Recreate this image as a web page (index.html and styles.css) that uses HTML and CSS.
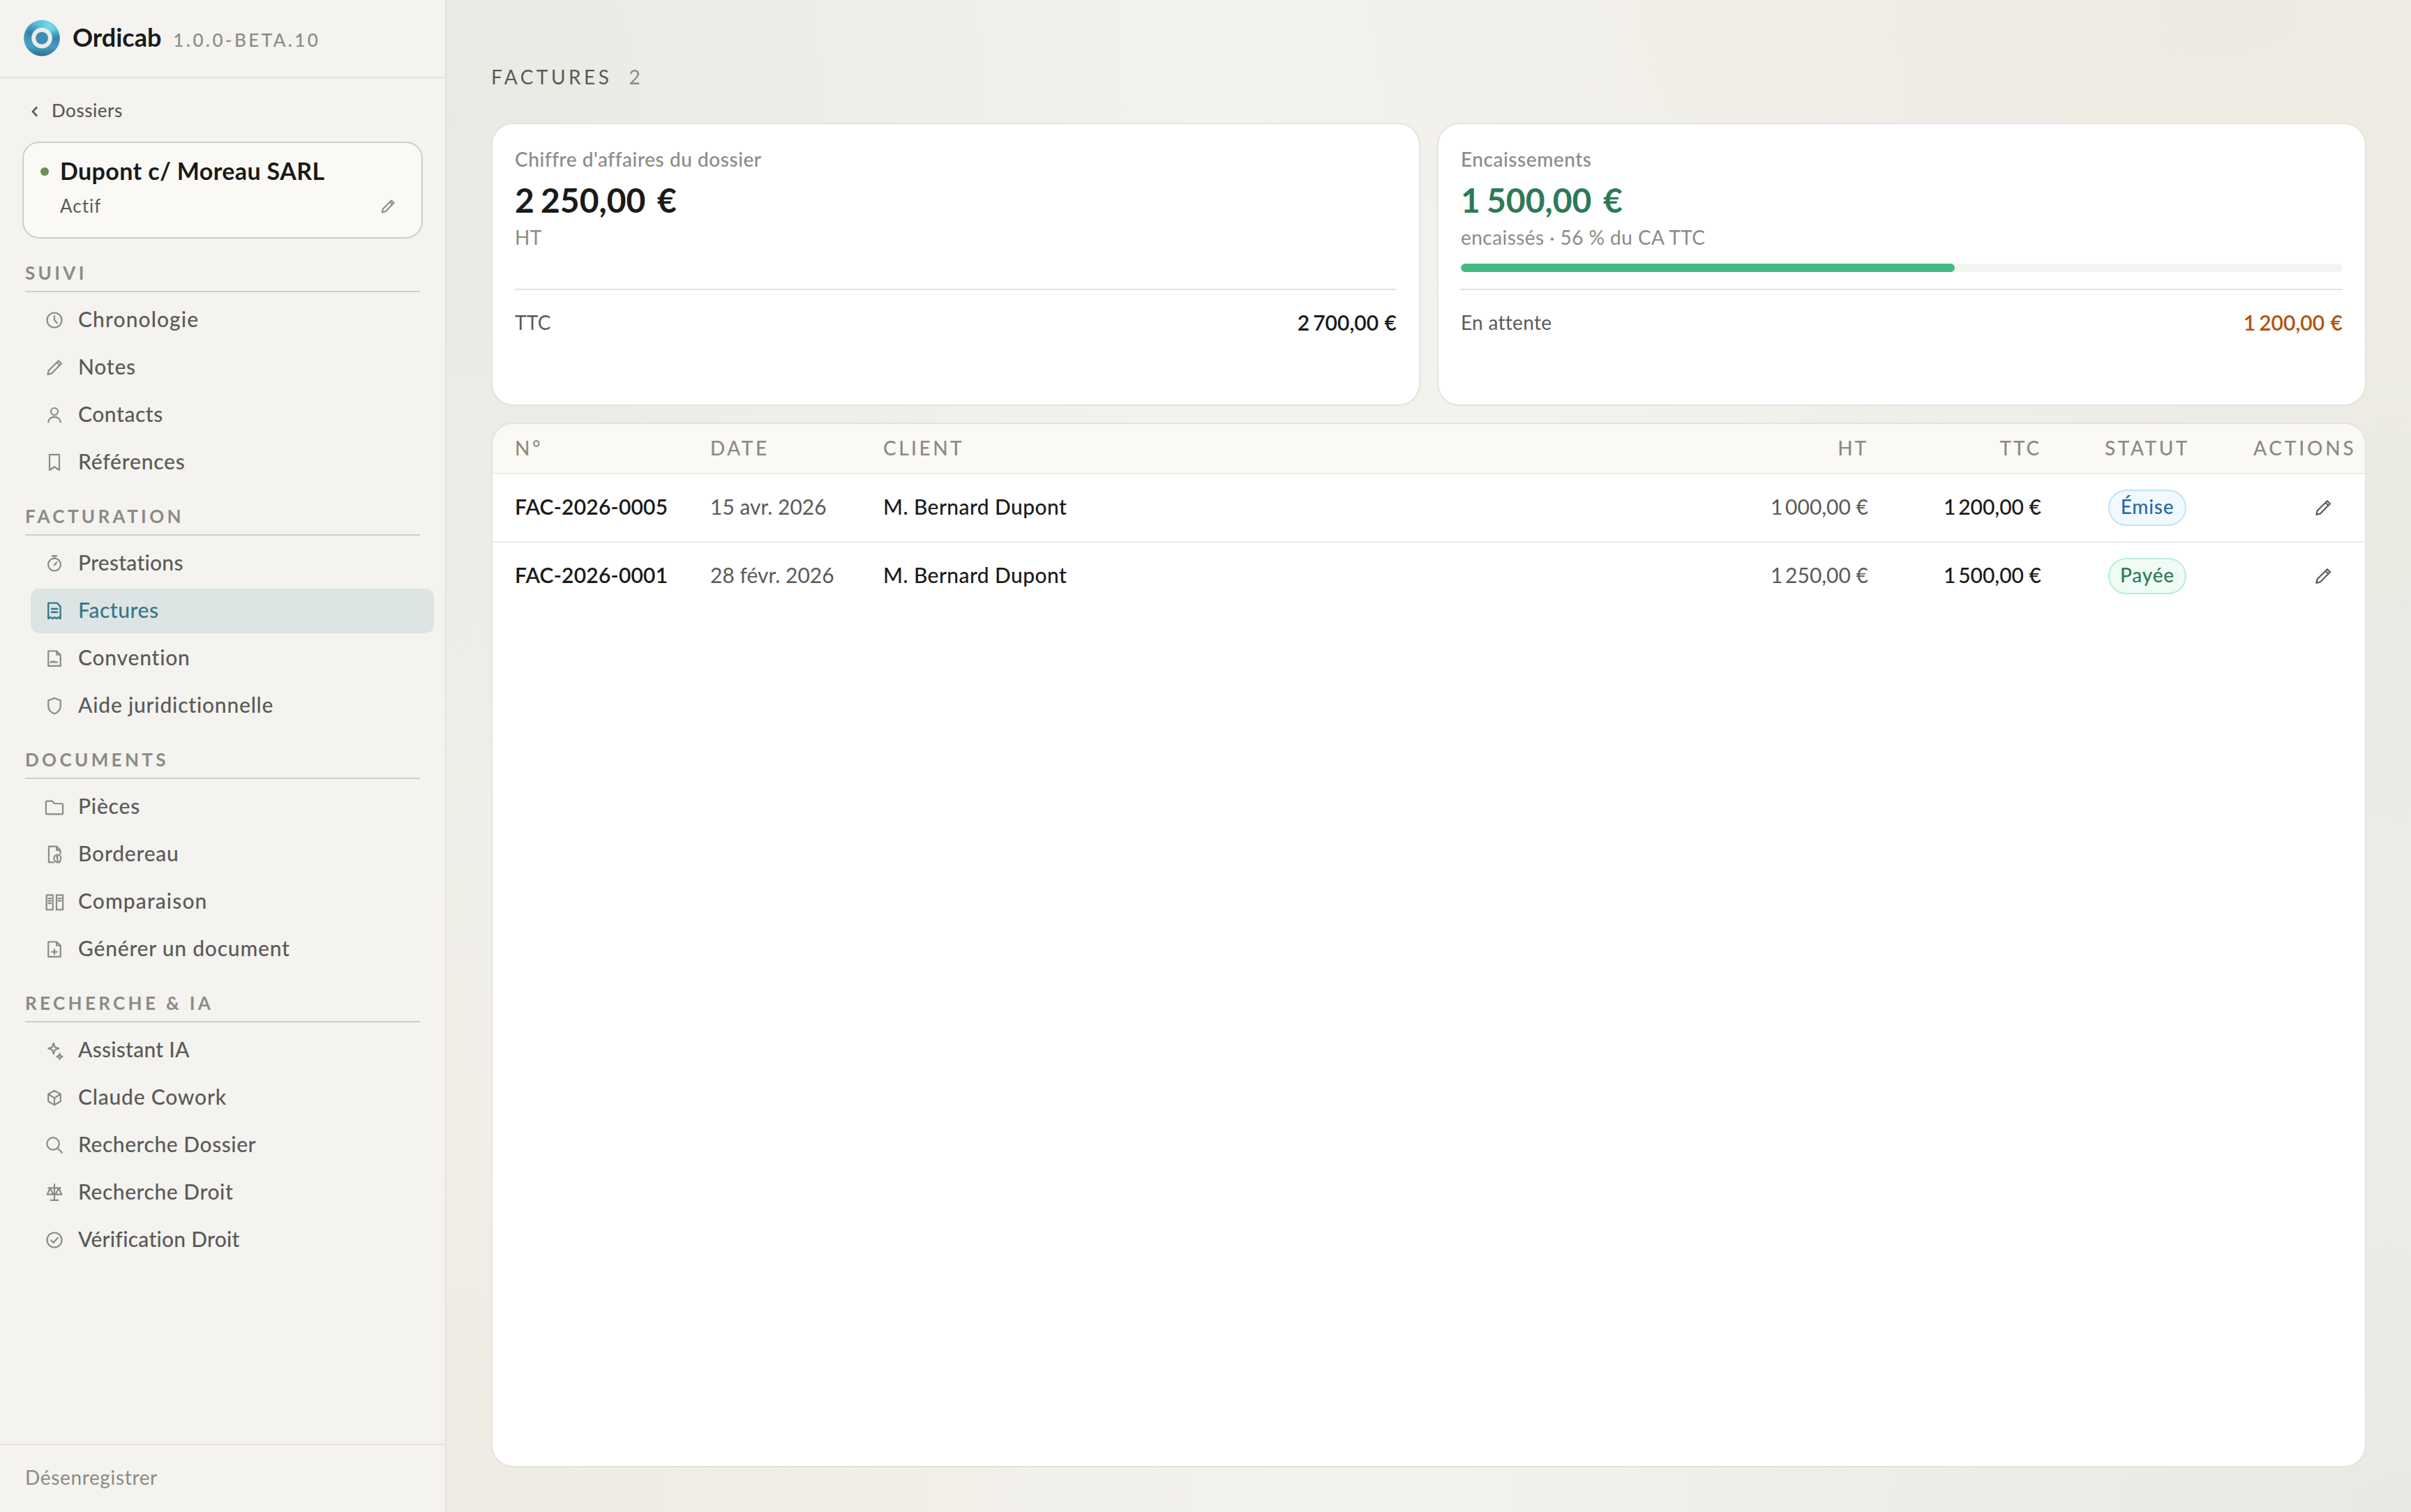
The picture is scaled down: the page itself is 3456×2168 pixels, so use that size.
FILE: index.html
```html
<!DOCTYPE html>
<html lang="fr">
<head>
<meta charset="utf-8">
<title>Ordicab – Factures</title>
<link rel="stylesheet" href="styles.css">
</head>
<body>
<svg class="sprite" aria-hidden="true">
  <symbol id="i-pencil" viewBox="0 0 16 16"><path d="M11.4 2.4l2.3 2.3-8 8.1-3.2.9.8-3.3zM10 3.9l2.3 2.3"/></symbol>
</svg>
<div class="app">
  <aside class="sidebar">
    <header class="brand">
      <svg class="brand-logo" viewBox="0 0 56 56">
        <defs>
          <linearGradient id="lg-ring" x1="0" y1="0" x2="0" y2="1">
            <stop offset="0" stop-color="#5cc3da"/>
            <stop offset=".35" stop-color="#4fb0cd"/>
            <stop offset=".75" stop-color="#449dc0"/>
            <stop offset="1" stop-color="#2b6f92"/>
          </linearGradient>
          <radialGradient id="lg-hi" cx=".72" cy=".2" r=".36">
            <stop offset="0" stop-color="#78dce9"/>
            <stop offset="1" stop-color="#78dce9" stop-opacity="0"/>
          </radialGradient>
          <radialGradient id="lg-lo" cx=".16" cy=".36" r=".3">
            <stop offset="0" stop-color="#2f80a8"/>
            <stop offset="1" stop-color="#2f80a8" stop-opacity="0"/>
          </radialGradient>
          <radialGradient id="lg-lo2" cx=".9" cy=".52" r=".26">
            <stop offset="0" stop-color="#3183aa"/>
            <stop offset="1" stop-color="#3183aa" stop-opacity="0"/>
          </radialGradient>
        </defs>
        <circle cx="28" cy="27.600" r="25.800" fill="url(#lg-ring)"/>
        <circle cx="28" cy="27.600" r="25.800" fill="url(#lg-hi)"/>
        <circle cx="28" cy="27.600" r="25.800" fill="url(#lg-lo)"/>
        <circle cx="28" cy="27.600" r="25.800" fill="url(#lg-lo2)"/>
        <circle cx="28" cy="27.600" r="14.800" fill="#ebebeb"/>
        <circle cx="28" cy="27.600" r="8.900" fill="#3c8eb3"/>
      </svg>
      <div class="brand-text">
        <span class="brand-name">Ordicab</span>
        <span class="brand-version">1.0.0-BETA.10</span>
      </div>
    </header>

    <div class="sidebar-body">
      <a class="back">
        <svg class="back-icon" viewBox="0 0 12 16"><path d="M9 1.5L3 8l6 6.5"/></svg>
        <span>Dossiers</span>
      </a>

      <div class="case">
        <div class="case-head"><i class="dot"></i><span class="case-name">Dupont c/ Moreau SARL</span></div>
        <div class="case-foot"><span class="case-status">Actif</span><svg class="icon case-edit"><use href="#i-pencil"/></svg></div>
      </div>

      <nav class="nav">
        <section class="group">
          <h2 class="group-title">Suivi</h2>
          <a class="item wide"><svg class="icon" viewBox="0 0 16 16"><circle cx="8" cy="8" r="6"/><path d="M8 4.5V8l2.2 2.4"/></svg><span>Chronologie</span></a>
          <a class="item"><svg class="icon"><use href="#i-pencil"/></svg><span>Notes</span></a>
          <a class="item snug"><svg class="icon" viewBox="0 0 16 16"><circle cx="8" cy="5.2" r="2.9"/><path d="M3 14c.2-2.700 2.200-4.400 5-4.400s4.800 1.700 5 4.400"/></svg><span>Contacts</span></a>
          <a class="item"><svg class="icon" viewBox="0 0 16 16"><path d="M4 1.600h8v12.700l-4-2.600-4 2.600z"/></svg><span>Références</span></a>
        </section>

        <section class="group">
          <h2 class="group-title">Facturation</h2>
          <a class="item tight"><svg class="icon" viewBox="0 0 16 16"><circle cx="8" cy="8.900" r="5.100"/><path d="M6.200 1.800h3.600M8 1.800v2M7.900 9.300l2-2.300"/></svg><span>Prestations</span></a>
          <a class="item active"><svg class="icon" viewBox="0 0 16 16"><path d="M3 14.300V1.500h7.200l2.700 2.900v9.900l-1.700-1.200-1.600 1.200-1.600-1.200-1.600 1.200-1.600-1.200zM5.700 6.300h4.700M5.700 9h4.700"/></svg><span>Factures</span></a>
          <a class="item"><svg class="icon" viewBox="0 0 16 16"><path d="M3 2h6.800L13 5v9.200H3zM9.800 2v3H13M4.800 11.400l1.100-1 1 1 1.100-1 1 1 1.300-.4"/></svg><span>Convention</span></a>
          <a class="item"><svg class="icon" viewBox="0 0 16 16"><path d="M8 1.700l5 1.900v4.200c0 3.300-2 5.500-5 6.700-3-1.200-5-3.400-5-6.700V3.600z"/></svg><span>Aide juridictionnelle</span></a>
        </section>

        <section class="group">
          <h2 class="group-title">Documents</h2>
          <a class="item"><svg class="icon" viewBox="0 0 16 16"><path d="M1.100 12.900V4.200a1 1 0 0 1 1-1h4L8 5.300h5.900a1 1 0 0 1 1 1v6.600a1 1 0 0 1-1 1H2.100a1 1 0 0 1-1-1z"/></svg><span>Pièces</span></a>
          <a class="item"><svg class="icon" viewBox="0 0 16 16"><path d="M7.600 14.500H3.400v-13h6.400l3 3.100v3M9.800 1.500v3.100h3M9.600 10.300l.9-.7v3.200"/><circle cx="10.500" cy="11.300" r="2.900"/><path d="M12.400 14.500H10"/></svg><span>Bordereau</span></a>
          <a class="item wide"><svg class="icon" viewBox="0 0 16 16"><path d="M1.500 2.500h5.200v12H1.500zM9.700 2.500h5.200v12H9.700zM3 5.200h2.200M3 7.200h2.200M3 9.200h2.200M11.200 5.200h2.200M11.200 7.200h2.200"/></svg><span>Comparaison</span></a>
          <a class="item"><svg class="icon" viewBox="0 0 16 16"><path d="M3 2h6.800L13 5v9.200H3zM9.800 2v3H13M8 8.200v4M6 10.200h4"/></svg><span>Générer un document</span></a>
        </section>

        <section class="group">
          <h2 class="group-title">Recherche &amp; IA</h2>
          <a class="item tight"><svg class="icon" viewBox="0 0 16 16"><path d="M7.300 2.200l1.100 3.200 3.100 1.100-3.100 1.100-1.100 3.300-1.100-3.300-3.100-1.100 3.100-1.100zM12.300 10.800l.7 1.600 1.600.7-1.600.7-.7 1.500-.7-1.500-1.600-.7 1.600-.7z"/></svg><span>Assistant IA</span></a>
          <a class="item"><svg class="icon" viewBox="0 0 16 16"><path d="M8 2.200l5 2.800v6l-5 2.900L3 11V5zM3 5l5 3.300L13 5M8 8.300v5.600"/></svg><span>Claude Cowork</span></a>
          <a class="item snug"><svg class="icon" viewBox="0 0 16 16"><circle cx="6.900" cy="6.800" r="5"/><path d="M10.500 10.400l3.700 3.800"/></svg><span>Recherche Dossier</span></a>
          <a class="item snug"><svg class="icon" viewBox="0 0 16 16"><path d="M8 1.200v13M5 14.200h6M3 4.200h10M4.500 4.400L2.100 9.500h5zM11.500 4.400L8.900 9.500h5z"/></svg><span>Recherche Droit</span></a>
          <a class="item tight"><svg class="icon" viewBox="0 0 16 16"><circle cx="8" cy="8" r="6"/><path d="M5.300 8.200l1.900 2 3.600-4"/></svg><span>Vérification Droit</span></a>
        </section>
      </nav>
    </div>

    <footer class="sidebar-foot">Désenregistrer</footer>
  </aside>

  <main class="main">
    <h1 class="title"><span>FACTURES</span><span class="count">2</span></h1>

    <div class="stats">
      <article class="stat">
        <div class="stat-label">Chiffre d'affaires du dossier</div>
        <div class="stat-value">2<span class="th">&#8239;</span>250,00&nbsp;€</div>
        <div class="stat-sub">HT</div>
        <div class="bar-slot"></div>
        <div class="stat-line"><span>TTC</span><span class="amount">2<span class="th">&#8239;</span>700,00&nbsp;€</span></div>
      </article>
      <article class="stat">
        <div class="stat-label">Encaissements</div>
        <div class="stat-value green">1<span class="th">&#8239;</span>500,00&nbsp;€</div>
        <div class="stat-sub">encaissés · 56 % du CA TTC</div>
        <div class="bar-slot bar"><div class="bar-fill" style="width:56%"></div></div>
        <div class="stat-line"><span>En attente</span><span class="amount orange">1<span class="th">&#8239;</span>200,00&nbsp;€</span></div>
      </article>
    </div>

    <div class="table">
      <div class="row head">
        <span>N°</span><span>DATE</span><span>CLIENT</span><span class="num">HT</span><span class="num">TTC</span><span class="center">STATUT</span><span class="actions">ACTIONS</span>
      </div>
      <div class="row">
        <span class="ref">FAC-2026-0005</span><span class="muted">15 avr. 2026</span><span class="client">M. Bernard Dupont</span><span class="num muted">1<span class="th">&#8239;</span>000,00&nbsp;€</span><span class="num strong">1<span class="th">&#8239;</span>200,00&nbsp;€</span>
        <div class="center"><span class="badge blue">Émise</span></div>
        <button class="edit"><svg class="icon"><use href="#i-pencil"/></svg></button>
      </div>
      <div class="row">
        <span class="ref">FAC-2026-0001</span><span class="muted">28 févr. 2026</span><span class="client">M. Bernard Dupont</span><span class="num muted">1<span class="th">&#8239;</span>250,00&nbsp;€</span><span class="num strong">1<span class="th">&#8239;</span>500,00&nbsp;€</span>
        <div class="center"><span class="badge mint">Payée</span></div>
        <button class="edit"><svg class="icon"><use href="#i-pencil"/></svg></button>
      </div>
    </div>
  </main>
</div>
</body>
</html>
```
FILE: styles.css
```css
* { box-sizing: border-box; }

html, body { height: 100%; }

body {
  margin: 0;
  font-family: Lato, "Liberation Sans", sans-serif;
  font-size: 30px;
  font-weight: 500;
  color: #1a1a1a;
  font-variant-ligatures: none;
}

.sprite { display: none; }

.app { display: flex; height: 100vh; }

.icon {
  flex: none;
  width: 28px;
  height: 28px;
  fill: none;
  stroke: currentColor;
  stroke-width: 1.25;
  stroke-linecap: round;
  stroke-linejoin: round;
}

/* Narrow thousands separator */
.th { margin-right: -.13em; }

/* Sidebar */
.sidebar {
  display: flex;
  flex-direction: column;
  flex: none;
  width: 640px;
  background: #f4f3ef;
  border-right: 2px solid #e4e2da;
}

.brand {
  display: flex;
  align-items: center;
  gap: 16px;
  height: 112px;
  padding: 0 32px;
  border-bottom: 2px solid #e4e2da;
}

.brand-logo { width: 56px; height: 56px; }

.brand-text {
  display: flex;
  align-items: baseline;
  gap: 17px;
  padding-bottom: 5px;
}

.brand-name { font-size: 36px; font-weight: 700; }

.brand-version { font-size: 26px; letter-spacing: 3.4px; color: #8b8b85; }

.sidebar-body { flex: 1; padding: 0 32px; }

.back {
  display: flex;
  align-items: center;
  gap: 18px;
  height: 91px;
  padding: 0 0 0 12px;
  font-size: 26px;
  letter-spacing: .5px;
  color: #5a5a57;
}

.back-icon {
  width: 12px;
  height: 16px;
  margin-top: 4px;
  fill: none;
  stroke: currentColor;
  stroke-width: 2.6;
}

.case {
  display: flex;
  flex-direction: column;
  gap: 13px;
  height: 139px;
  padding: 19px 36px 0 24px;
  background: #faf9f5;
  border: 2px solid #cfcec6;
  border-radius: 24px;
}

.case-head { display: flex; align-items: center; gap: 16px; height: 40px; }

.dot { width: 12px; height: 12px; margin-top: 3px; border-radius: 50%; background: #6a8f57; }

.case-name { font-size: 34px; font-weight: 700; letter-spacing: .38px; }

.case-foot {
  display: flex;
  align-items: center;
  justify-content: space-between;
  height: 36px;
  padding-left: 28px;
  font-size: 26px;
  font-weight: 400;
  letter-spacing: 1px;
  color: #5a5a57;
}

.case-edit { width: 24px; height: 24px; margin-top: 2px; color: #8b8b85; stroke-width: 1.4; }

.nav { display: flex; flex-direction: column; gap: 29px; padding-top: 33px; }

.group { display: flex; flex-direction: column; gap: 4px; }

.group-title {
  margin: 0 4px 4px;
  padding-bottom: 10px;
  border-bottom: 2px solid #cfcec6;
  font-size: 26px;
  line-height: 32px;
  font-weight: 700;
  letter-spacing: 4.35px;
  text-transform: uppercase;
  color: #8b8b85;
}

.item {
  display: flex;
  align-items: center;
  gap: 20px;
  height: 64px;
  margin: 0 -16px 0 12px;
  padding: 0 20px;
  border-radius: 12px;
  letter-spacing: .78px;
  color: #5a5a57;
}

.item span { padding-bottom: 4px; }
.item.wide { letter-spacing: 1.1px; }
.item.snug { letter-spacing: .55px; }
.item.tight { letter-spacing: .25px; }
.item .icon { color: #8b8b85; }
.item.active { background: #dde4e4; letter-spacing: .55px; color: #347888; }
.item.active .icon { color: inherit; stroke-width: 1.35; }

.sidebar-foot {
  height: 98px;
  padding: 0 36px 6px;
  border-top: 2px solid #e4e2da;
  font-size: 28px;
  font-weight: 400;
  line-height: 92px;
  letter-spacing: .65px;
  color: #8b8b85;
}

/* Main area */
.main {
  display: flex;
  flex-direction: column;
  flex: 1;
  min-width: 0;
  padding: 88px 64px 64px;
  background:
    radial-gradient(ellipse 38% 65% at 0% 8%, rgba(231, 233, 226, .9), rgba(231, 233, 226, 0)),
    radial-gradient(ellipse 50% 42% at 90% 0%, rgba(238, 234, 226, .9), rgba(238, 234, 226, 0)),
    radial-gradient(ellipse 40% 55% at 100% 40%, rgba(232, 233, 226, .9), rgba(232, 233, 226, 0)),
    radial-gradient(ellipse 50% 45% at 100% 100%, rgba(231, 233, 226, .95), rgba(231, 233, 226, 0)),
    radial-gradient(ellipse 45% 60% at 0% 100%, rgba(239, 235, 227, .95), rgba(239, 235, 227, 0)),
    #f3f2ed;
}

.title {
  display: flex;
  gap: 24px;
  margin: 0 0 44px;
  font-size: 28px;
  line-height: 44px;
  font-weight: 400;
  letter-spacing: 4.5px;
  color: #5a5a57;
}

.count { letter-spacing: 0; color: #8b8b85; }

.stats { display: grid; grid-template-columns: 1fr 1fr; gap: 24px; margin-bottom: 24px; }

.stat {
  height: 406px;
  padding: 32px;
  background: #fff;
  border: 2px solid #e6e3dc;
  border-radius: 32px;
}

.stat-label { font-size: 28px; line-height: 36px; letter-spacing: .54px; color: #8b8b85; }

.stat-value {
  margin: 13px 0 7px;
  font-size: 48px;
  line-height: 56px;
  font-weight: 700;
  letter-spacing: 2.4px;
  word-spacing: 5px;
}

.stat-value .th { margin-right: -.06em; }

.stat-value.green { color: #2d7a58; }

.stat-sub { font-size: 28px; line-height: 36px; font-weight: 400; letter-spacing: .45px; color: #8b8b85; }

.bar-slot { height: 12px; margin: 20px 0 24px; border-radius: 6px; }
.bar { background: #f4f3ef; overflow: hidden; }
.bar-fill { height: 100%; border-radius: 6px; background: #45b883; }

.stat-line {
  display: flex;
  justify-content: space-between;
  padding-top: 26px;
  border-top: 2px solid #e6e3dc;
  font-size: 28px;
  line-height: 40px;
  font-weight: 400;
  letter-spacing: .3px;
  color: #5a5a57;
}

.amount { font-size: 30px; font-weight: 600; letter-spacing: 1.2px; word-spacing: 1px; color: #1a1a1a; }
.amount .th { margin-right: -.08em; }
.amount.orange { color: #b0540f; }

/* Invoice table */
.table {
  flex: 1;
  background: #fff;
  border: 2px solid #e4e2dc;
  border-radius: 32px;
  overflow: hidden;
}

.row {
  display: grid;
  grid-template-columns: 256px 224px 1fr 224px 224px 256px 128px;
  column-gap: 24px;
  align-items: center;
  height: 98px;
  padding: 0 32px;
  border-bottom: 2px solid #eeece6;
}

.row:last-child { border-bottom-color: transparent; }
.row > span { padding-bottom: 5px; }

.row.head {
  height: 72px;
  background: #faf9f5;
  font-size: 28px;
  letter-spacing: 3.5px;
  color: #8b8b85;
}

.row.head > span { padding-bottom: 3px; }

.num { text-align: right; white-space: nowrap; letter-spacing: .7px; }
.head .num { letter-spacing: 2.8px; }
.center { text-align: center; }
.actions { white-space: nowrap; letter-spacing: 3.8px; }
.ref { font-weight: 600; letter-spacing: .2px; }
.muted { font-weight: 400; color: #5a5a57; }
.client { letter-spacing: .42px; }
.strong { font-weight: 500; }

.badge {
  display: inline-block;
  width: 112px;
  height: 52px;
  border: 2px solid;
  border-radius: 26px;
  font-size: 28px;
  line-height: 45px;
  letter-spacing: .8px;
  vertical-align: middle;
}

.badge.blue { background: #f1f9ff; border-color: #bfe2fb; color: #256ba8; }
.badge.mint { background: #effcf5; border-color: #b6f0d2; color: #2d7a58; }

.edit {
  display: flex;
  justify-self: end;
  padding: 14px;
  border: 0;
  background: none;
  color: #5a5a57;
}
```
